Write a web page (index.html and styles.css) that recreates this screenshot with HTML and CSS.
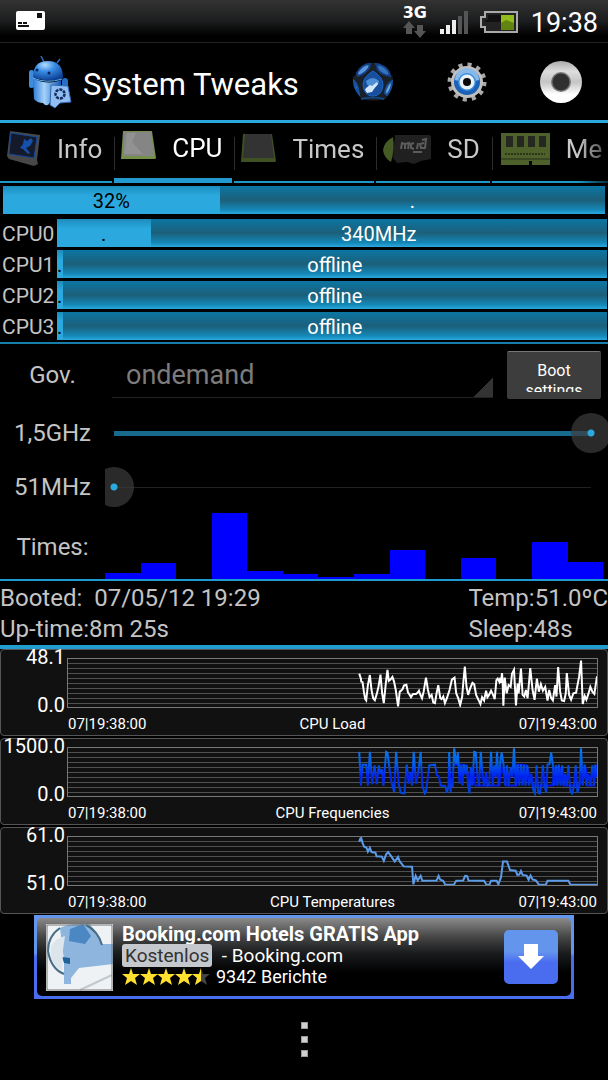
FILE: index.html
```html
<!DOCTYPE html>
<html lang="en">
<head>
    <meta charset="UTF-8">
    <meta name="viewport" content="width=device-width, initial-scale=1.0">
    <title>System Tweaks</title>
    <link rel="stylesheet" href="styles.css">
</head>
<body>

    <div class="status-bar">
        <svg class="sim-icon" width="30" height="20" viewBox="0 0 30 20">
            <rect x="0" y="0" width="29" height="19" rx="2" fill="#fff"/>
            <path d="M21 2h5v5h-5zM2 11h4v2H2zM7 11h4v2H7zM2 14h11v2H2z" fill="#111"/>
        </svg>
        <div class="network">
            <span>3G</span>
            <svg width="24" height="17" viewBox="0 0 24 17">
                <path d="M6 0l6 7H9v6H3V7H0z" fill="#555"/>
                <path d="M17 17l-6-7h3V4h6v6h3z" fill="#555"/>
            </svg>
        </div>
        <svg class="signal" width="29" height="24" viewBox="0 0 29 24">
            <path d="M0 18h4v5H0zM6 14h4v9H6zM12 9h4v14h-4z" fill="#eee"/>
            <path d="M18 5h4v18h-4zM24 0h4v23h-4z" fill="#555"/>
        </svg>
        <svg class="battery" width="38" height="22" viewBox="0 0 38 22">
            <path d="M5 1h32v20H5v-5H1V6h4z" fill="#222" stroke="#aaa" stroke-width="2"/>
            <path d="M8 4h13v7H5v-2h3z" fill="#111"/>
            <rect x="21" y="4" width="13" height="15" fill="#93bd1c"/>
            <path d="M21 12l5-3 8 3v7H21z" fill="#638411"/>
        </svg>
        <span class="clock">19:38</span>
    </div>

    <header class="app-bar">
        <svg class="app-logo" width="44" height="54" viewBox="0 0 44 54">
            <defs>
                <radialGradient id="droid" cx="40%" cy="20%" r="80%">
                    <stop offset="0" stop-color="#b5dcff"/>
                    <stop offset=".4" stop-color="#3b8fe6"/>
                    <stop offset="1" stop-color="#0b3f96"/>
                </radialGradient>
                <linearGradient id="droidBody">
                    <stop offset="0" stop-color="#2c7bd6"/>
                    <stop offset=".4" stop-color="#a5d2fb"/>
                    <stop offset="1" stop-color="#1458b4"/>
                </linearGradient>
            </defs>
            <path d="M15 7L12 1M28 8l3-4" stroke="#2a6fc4" stroke-width="1.5"/>
            <rect x="0" y="15" width="5" height="18" rx="2.5" fill="#3f8cdc"/>
            <rect x="33" y="23" width="6" height="15" rx="3" fill="#276fc6"/>
            <path d="M4 23q14 8 28 2v20q-6 5-12 3v1q-3 3-6-1-6 0-9-4z" fill="url(#droidBody)"/>
            <path d="M4 22q0-16 15-16t15 17q-14 6-30-1z" fill="url(#droid)"/>
            <path d="M4 23q14 6 29 1" stroke="#5db4ff" fill="none"/>
            <circle cx="8" cy="15" r="1.5" fill="#062558"/>
            <circle cx="20" cy="18" r="1.5" fill="#062558"/>
            <path d="M22 30l17 1 3 16-11 1-5 5-5-3z" fill="#91bdf3" stroke="#2c67b2"/>
            <circle cx="31" cy="39" r="4.5" fill="none" stroke="#102c58" stroke-width="2.5" stroke-dasharray="3 1"/>
        </svg>
        <h1>System Tweaks</h1>
        <button class="icon-btn" aria-label="Tools">
            <svg width="42" height="42" viewBox="0 0 42 42">
                <path d="M16 2h11l14 14-7 22q-13 3-25 0L1 16z" fill="#1a2027"/>
                <path d="M5 12Q10 3 18 3l-1 4q-4 6-11 8z" fill="#5b95dc" stroke="#123f86" stroke-width="2"/>
                <path d="M24 3q9 1 13 8l1 4q-8-1-12-6z" fill="#3474bd" stroke="#123f86" stroke-width="2"/>
                <path d="M2 20q4 4 5 13-5-6-5-13zM40 20q0 8-5 14l-2-2q1-8 7-12z" fill="#76a7d9" stroke="#15529f" stroke-width="2"/>
                <path d="M9 38q12-3 23 0" fill="none" stroke="#144786" stroke-width="2"/>
                <path d="M21 10q10 6 10 14-1 11-10 11T11 24q0-8 10-14z" fill="#174f9e" stroke="#1c66c4"/>
                <path d="M14 20q7-6 13 0-1 7-7 6-5 0-6-6z" fill="#4d8ed6"/>
                <path d="M14 27l4-3 2 1 5-4 1 2-4 5-2 3-5 1-2-3z" fill="#d2e6f8"/>
            </svg>
        </button>
        <button class="icon-btn" aria-label="Settings">
            <svg width="42" height="42" viewBox="0 0 42 42">
                <circle cx="21" cy="21" r="17" fill="none" stroke="#a9a9a9" stroke-width="5" stroke-dasharray="4 4.9"/>
                <circle cx="21" cy="21" r="16" fill="#bfbfbf"/>
                <circle cx="21" cy="21" r="13" fill="#1b61b6"/>
                <path d="M9 19a12 12 0 0 1 24 0q-12 4-24 0z" fill="#88b9e8"/>
                <circle cx="21" cy="21" r="9" fill="#3c8edc"/>
                <circle cx="21" cy="21" r="7.5" fill="#e9f1f8"/>
                <circle cx="21" cy="21" r="4" fill="#080808"/>
            </svg>
        </button>
        <button class="icon-btn" aria-label="Record">
            <svg width="42" height="42" viewBox="0 0 42 42">
                <defs>
                    <linearGradient id="ring" x2="0" y2="1">
                        <stop offset="0" stop-color="#aaa"/>
                        <stop offset=".25" stop-color="#ddd"/>
                        <stop offset=".5" stop-color="#c4c4c4"/>
                        <stop offset=".8" stop-color="#fff"/>
                    </linearGradient>
                </defs>
                <circle cx="21" cy="21" r="21" fill="url(#ring)"/>
                <circle cx="21" cy="21" r="10" fill="#777"/>
                <circle cx="21" cy="21" r="8.5" fill="#303030"/>
            </svg>
        </button>
    </header>

    <nav class="tabs">
        <button class="tab">
            <svg width="34" height="36" viewBox="0 0 34 36">
                <path d="M3 0l30 4-3 25 1 4-4 2-25-7-2-3z" fill="#484848"/>
                <path d="M4 2l26 4-3 21-25-4z" fill="#151a2a" stroke="#13469f"/>
                <path d="M17 8l3 2 4-3 2 3-3 5-4 2 4 5-2 1-5-5-3-1 3-4z" fill="#1550aa"/>
            </svg>
            Info
        </button>
        <button class="tab selected">
            <svg width="35" height="36" viewBox="0 0 35 36">
                <path d="M2 1h29l4 27-1 1H0z" fill="#75904b"/>
                <path d="M3 2h27l3 24H2z" fill="#858585"/>
                <path d="M6 3h9l-4 9 11 12H3z" fill="#929292"/>
            </svg>
            CPU
        </button>
        <button class="tab">
            <svg width="35" height="36" viewBox="0 0 35 36">
                <path d="M2 3h29l4 27-1 1H0z" fill="#3f5022"/>
                <path d="M4 3h26l3 24H2z" fill="#333"/>
            </svg>
            Times
        </button>
        <button class="tab">
            <svg width="48" height="36" viewBox="0 0 48 36">
                <path d="M12 4h34q2 0 2 3v21l-10 2-7 3-7-2-10 1-4-5z" fill="#202020"/>
                <path d="M10 6q-9 5-10 13 1 8 8 12 4-13 2-25z" fill="#465a26"/>
                <path d="M18 18l1-6 3 1v5M22 13l4-1-1 6M31 12l-3 1v4l3 1M34 18l1-6M39 9l4-1-1 9h-4l-1-4 4-1M30 21h9" fill="none" stroke="#5c5c5c" stroke-width="2"/>
            </svg>
            SD
        </button>
        <button class="tab">
            <svg width="49" height="36" viewBox="0 0 49 36">
                <path d="M0 2h49v32H31v-4h-3v4H0z" fill="#4e612b"/>
                <path d="M5 5h7v11H5zM16 5h7v11h-7zM27 5h7v11h-7zM38 5h7v11h-7z" fill="#242820"/>
                <path d="M4 23h40" stroke="#2b3818" stroke-width="2" stroke-dasharray="2 1"/>
                <path d="M0 28h49" stroke="#25301a"/>
            </svg>
            Me
        </button>
    </nav>

    <section class="load">
        <div class="meter total">
            <div class="used" style="width: 36%">32%</div>
            <div class="rest">.</div>
        </div>
        <div class="core">
            <span>CPU0</span>
            <div class="meter">
                <div class="used" style="width: 17%">.</div>
                <div class="rest">340MHz</div>
            </div>
        </div>
        <div class="core">
            <span>CPU1</span>
            <div class="meter">
                <div class="used" style="width: 1%">.</div>
                <div class="rest">offline</div>
            </div>
        </div>
        <div class="core">
            <span>CPU2</span>
            <div class="meter">
                <div class="used" style="width: 1%">.</div>
                <div class="rest">offline</div>
            </div>
        </div>
        <div class="core">
            <span>CPU3</span>
            <div class="meter">
                <div class="used" style="width: 1%">.</div>
                <div class="rest">offline</div>
            </div>
        </div>
    </section>

    <section class="settings">
        <div class="row governor">
            <label for="governor">Gov.</label>
            <select id="governor">
                <option>ondemand</option>
            </select>
            <button class="boot-btn"><span>Boot settings</span></button>
        </div>
        <div class="row">
            <label for="maxFreq">1,5GHz</label>
            <div class="slider"><input type="range" class="filled" id="maxFreq" min="51" max="1500" value="1500"></div>
        </div>
        <div class="row">
            <label for="minFreq">51MHz</label>
            <div class="slider"><input type="range" id="minFreq" min="51" max="1500" value="51"></div>
        </div>
        <div class="row times">
            <span class="label">Times:</span>
            <div class="bars">
                <i style="height: 6px"></i>
                <i style="height: 16px"></i>
                <i style="height: 0px"></i>
                <i style="height: 66px"></i>
                <i style="height: 8px"></i>
                <i style="height: 5px"></i>
                <i style="height: 2px"></i>
                <i style="height: 5px"></i>
                <i style="height: 29px"></i>
                <i style="height: 0px"></i>
                <i style="height: 21px"></i>
                <i style="height: 0px"></i>
                <i style="height: 37px"></i>
                <i style="height: 17px"></i>
            </div>
        </div>
    </section>

    <section class="uptime">
        <div>
            <p>Booted:&nbsp; 07/05/12 19:29</p>
            <p>Up-time:8m 25s</p>
        </div>
        <div>
            <p>Temp:51.0ºC</p>
            <p>Sleep:48s</p>
        </div>
    </section>

    <section class="graphs">
        <div class="graph">
            <div class="scale"><span>48.1</span><span>0.0</span></div>
            <svg class="plot" viewBox="-819 55 1593 147" preserveAspectRatio="none">
                <polyline class="load-line" points="58,100 63,115 64,124 68,126 72,155 76,178 79,182 84,135 90,104 95,150 100,175 105,181 110,165 116,140 122,103 127,160 132,190 138,130 143,88 147,122 152,118 158,110 163,125 168,150 175,200 180,155 184,152 188,148 193,136 200,134 205,158 210,165 214,172 219,163 224,162 229,162 234,158 238,152 241,162 247,175 252,155 259,112 265,150 270,172 276,165 281,188 286,190 291,160 296,135 302,175 306,178 311,170 316,190 322,175 330,150 337,118 345,112 350,160 356,175 362,196 368,170 372,120 376,78 381,140 386,165 392,145 399,128 404,132 410,165 417,180 423,193 428,172 434,182 440,152 444,172 449,165 455,152 461,165 466,178 471,120 475,115 480,125 483,112 485,128 488,98 490,130 492,198 496,112 502,160 508,135 514,140 518,100 524,88 530,197 535,130 538,160 545,84 550,165 555,170 560,150 565,175 569,130 573,83 580,150 586,180 593,115 599,155 605,132 611,152 618,140 625,182 630,150 636,175 641,182 648,135 652,170 657,80 663,155 668,182 675,184 680,160 683,98 690,165 696,180 703,160 711,158 720,110 726,60 731,193 737,168 742,180 748,162 754,140 760,155 766,162 774,108"/>
            </svg>
            <div class="legend"><span>07|19:38:00</span><span>CPU Load</span><span>07|19:43:00</span></div>
        </div>
        <div class="graph">
            <div class="scale"><span>1500.0</span><span>0.0</span></div>
            <svg class="plot" viewBox="-819 321 1593 147" preserveAspectRatio="none">
                <defs>
                    <linearGradient id="freq" gradientUnits="userSpaceOnUse" x1="0" y1="321" x2="0" y2="468">
                        <stop offset="0" stop-color="#0a78f0"/>
                        <stop offset=".3" stop-color="#0062ea"/>
                        <stop offset=".6" stop-color="#0022f0"/>
                        <stop offset="1" stop-color="#0050d8"/>
                    </linearGradient>
                </defs>
                <polyline class="freq-line low" points="342,372 370,372 380,374 390,436 400,380 408,436 480,436 485,374 495,410 500,436 530,436 534,372 560,374 575,410 582,436 640,436 646,380 652,436 666,380 674,436 720,436 740,380 745,436 764,436 774,372"/>
                <polyline class="freq-line" points="58,333 63,436 68,372 79,372 84,436 90,333 97,432 104,374 111,432 117,374 121,400 126,386 131,436 139,333 143,335 150,390 155,425 158,436 163,456 169,333 177,430 183,458 194,460 201,372 207,430 213,395 217,436 222,333 229,430 235,400 243,333 248,436 255,460 259,455 269,374 286,372 292,405 298,408 303,436 317,437 322,458 327,437 329,333 333,458 336,410 339,440 344,322 350,370 355,335 360,430 365,374 369,436 373,372 378,402 382,374 386,436 390,460 394,380 399,436 404,333 409,335 414,410 419,436 424,333 429,400 434,436 440,395 444,436 449,434 455,333 460,436 465,374 469,410 473,333 478,436 483,360 487,335 493,374 498,436 503,374 508,436 514,380 519,410 524,322 529,436 535,372 540,436 545,372 550,436 554,374 559,436 564,374 570,436 576,400 582,450 587,460 592,374 597,458 602,460 606,436 611,374 616,436 621,458 625,372 631,370 636,335 641,372 645,436 650,374 655,436 659,372 664,436 669,374 673,436 678,400 683,436 688,374 694,455 699,460 705,436 710,374 715,458 721,436 726,322 731,436 737,372 742,436 748,400 754,436 760,374 765,436 769,372 773,410"/>
            </svg>
            <div class="legend"><span>07|19:38:00</span><span>CPU Frequencies</span><span>07|19:43:00</span></div>
        </div>
        <div class="graph">
            <div class="scale"><span>61.0</span><span>51.0</span></div>
            <svg class="plot" viewBox="-819 587 1593 147" preserveAspectRatio="none">
                <polyline class="temp-line" points="58,602 61,592 64,590 68,605 73,617 80,620 84,632 90,620 95,633 107,635 110,646 126,647 132,660 139,640 145,633 150,640 155,647 165,662 175,648 180,662 192,677 217,678 221,732 228,706 234,720 243,706 248,721 291,720 297,706 302,718 311,721 317,733 343,733 350,721 371,720 377,706 383,707 387,720 434,721 441,733 450,733 455,721 472,721 477,732 485,710 491,662 503,662 512,688 529,690 534,703 540,702 545,691 550,703 562,705 568,718 574,705 580,717 590,720 599,733 620,733 625,721 688,721 694,733 774,733"/>
            </svg>
            <div class="legend"><span>07|19:38:00</span><span>CPU Temperatures</span><span>07|19:43:00</span></div>
        </div>
    </section>

    <div class="ad">
        <a class="ad-inner" href="#">
            <svg class="ad-image" width="67" height="67" viewBox="0 0 67 67">
                <rect width="67" height="67" fill="#eef2f5"/>
                <path d="M14 4q8-4 16-4h14l12 20h11v20l-34 4-8 10v6h-7V36l-1-8z" fill="#8db5dd"/>
                <path d="M24 5l13-5 8 12-6 8-16-3z" fill="#4b87c2"/>
                <path d="M16 33l8 1v6l-6-1z" fill="#206298"/>
                <path d="M14 4Q2 12 2 27q3 18 16 23M40 1q12 6 16 20" fill="none" stroke="#456d86" stroke-width="2"/>
                <path d="M5 22q5-8 14-10l-2 14-1 20Q3 42 5 22z" fill="#dce5eb"/>
                <path d="M34 66l32-15" stroke="#c3c8cc" stroke-width="2"/>
                <rect x="1" y="1" width="65" height="65" fill="none" stroke="#777"/>
            </svg>
            <div class="ad-text">
                <strong>Booking.com Hotels GRATIS App</strong>
                <div><span class="price">Kostenlos</span>&nbsp; - Booking.com</div>
                <div class="rating">
                    <svg width="88" height="18" viewBox="0 0 88 18">
                        <defs>
                            <path id="star" d="M9 0l2 6h7l-5 4 2 7-6-4-6 4 2-7-5-4h7z"/>
                        </defs>
                        <use href="#star" fill="#ffe02e"/>
                        <use href="#star" x="18" fill="#ffe02e"/>
                        <use href="#star" x="35" fill="#ffe02e"/>
                        <use href="#star" x="53" fill="#ffe02e"/>
                        <use href="#star" x="70" fill="#444"/>
                        <path d="M79 0v13l-6 4 2-7-5-4h7z" fill="#ffe02e"/>
                    </svg>
                    9342 Berichte
                </div>
            </div>
            <span class="download">
                <svg width="26" height="26" viewBox="0 0 26 26">
                    <path d="M6 0h14v12h6L13 25 0 12h6z" fill="#fff"/>
                </svg>
            </span>
        </a>
    </div>

    <button class="menu-btn" aria-label="Menu"><i></i><i></i><i></i></button>

</body>
</html>
```
FILE: styles.css
```css
* {
    box-sizing: border-box;
}
body {
    font-family: Roboto, sans-serif;
    background: #000;
    color: #c4c4c4;
    margin: 0;
    overflow-x: hidden;
}
button, select, input {
    font-family: inherit;
    margin: 0;
}
button {
    background: none;
    border: none;
    padding: 0;
    color: inherit;
}
p {
    margin: 0;
}

/* status bar */
.status-bar {
    display: flex;
    align-items: center;
    height: 43px;
    padding: 0 10px 0 16px;
    background: linear-gradient(#333, #1c1d1e 50%, #000 85%);
    border-bottom: 1px solid #222;
}
.sim-icon {
    margin-right: auto;
}
.network {
    display: flex;
    flex-direction: column;
    align-items: center;
    width: 24px;
    margin-right: 13px;
}
.network span {
    font: bold 16px/16px "DejaVu Sans", sans-serif;
    color: #fff;
}
.signal {
    margin: 4px 11px 0 0;
}
.battery {
    margin: 2px 13px 0 0;
}
.clock {
    padding-top: 3px;
    color: #fff;
    font-size: 27px;
}

/* title bar */
.app-bar {
    display: flex;
    align-items: center;
    height: 80px;
    padding: 0 26px 0 29px;
    border-bottom: 3px solid #2ba9df;
}
.app-bar h1 {
    flex: 1;
    margin: 0 0 0 10px;
    padding-top: 5px;
    color: #fff;
    font-size: 31px;
    font-weight: 400;
}
.icon-btn {
    display: flex;
    margin-left: 52px;
}

/* tabs */
.tabs {
    display: flex;
    gap: 2px;
    height: 60px;
    overflow: hidden;
    -webkit-mask-image: linear-gradient(to right, #000 95%, transparent 102%);
    mask-image: linear-gradient(to right, #000 95%, transparent 102%);
}
.tab {
    display: flex;
    flex: none;
    align-items: center;
    gap: 16px;
    padding: 0 10px 6px 7px;
    border-bottom: 2px solid #1e98cc;
    background: linear-gradient(#2c2c2c, #2c2c2c) left 14px / 1px 33px no-repeat;
    color: #c8c8c8;
    font-size: 26px;
}
.tab:first-child {
    background: none;
}
.tab:last-child {
    padding-left: 9px;
}
.tab.selected {
    border-bottom: 5px solid #2299cf;
    color: #fff;
}

/* cpu load */
.load {
    padding: 3px 1px 2px 2px;
    border-bottom: 2px solid #167fa9;
}
.core {
    display: flex;
    align-items: center;
    margin-top: 3px;
}
.core span {
    width: 55px;
    font-size: 21px;
    line-height: 26px;
    padding-top: 2px;
}
.meter {
    display: flex;
    flex: 1;
    height: 28px;
    line-height: 30px;
    text-align: center;
    font-size: 20px;
    background: linear-gradient(#0b76a3, #1c5f7a 50%, #1488b8 85%, #2ba9df);
}
.meter.total {
    margin: 0 2px 5px 1px;
}
.used {
    background: linear-gradient(#1c8dbd, #2ba9df 35%);
    color: #000;
}
.rest {
    flex: 1;
    color: #fff;
}

/* governor and frequencies */
.settings {
    border-bottom: 2px solid #1e9bd0;
}
.row {
    display: flex;
    align-items: center;
    height: 54px;
}
.row label, .row .label {
    flex: none;
    width: 105px;
    text-align: center;
    font-size: 24px;
}
.governor {
    height: 62px;
}
.row select {
    flex: 1;
    appearance: none;
    height: 46px;
    margin: 0 14px 0 7px;
    padding: 0 14px;
    border: none;
    border-bottom: 1px solid #222;
    background: linear-gradient(135deg, transparent 50%, #333 50%) right bottom / 20px 20px no-repeat;
    color: #7c7c7c;
    font-size: 27px;
}
.boot-btn {
    width: 94px;
    height: 48px;
    margin-right: 7px;
    padding: 9px 14px 7px;
    border-top: 1px solid #777;
    border-radius: 2px;
    background: #3d3d3d;
    color: #fff;
    font-size: 16px;
    line-height: 20px;
}
.boot-btn span {
    display: block;
    height: 31px;
    overflow: hidden;
}
.slider {
    flex: 1;
    overflow: hidden;
}
.slider input {
    display: block;
    appearance: none;
    width: calc(100% + 14px);
    height: 40px;
    margin-left: -11px;
    background: linear-gradient(#222, #222) center / calc(100% - 40px) 1px no-repeat;
}
.slider .filled {
    background: linear-gradient(#176a8b, #176a8b) center / calc(100% - 40px) 5px no-repeat;
}
.slider input::-webkit-slider-thumb {
    appearance: none;
    width: 40px;
    height: 40px;
    border-radius: 50%;
    background: radial-gradient(circle, #2ba9df 3px, rgba(60, 60, 60, 0.7) 4px);
}
.times {
    height: 65px;
}
.bars {
    display: flex;
    flex: 1;
    align-items: flex-end;
    align-self: stretch;
    padding-right: 5px;
}
.bars i {
    flex: 1;
    background: #00f;
}

/* uptime */
.uptime {
    display: flex;
    justify-content: space-between;
    padding-top: 2px;
    border-bottom: 4px solid #229bcf;
    font-size: 24px;
    line-height: 31px;
}

/* graphs */
.graphs {
    display: grid;
    gap: 2px;
}
.graph {
    display: grid;
    grid-template-columns: 66px 1fr;
    align-content: start;
    height: 87px;
    padding: 8px 9px 0 0;
    border: 1px solid #555;
    border-radius: 4px;
    background: #111;
    color: #fff;
}
.scale {
    display: flex;
    flex-direction: column;
    justify-content: space-between;
    height: 70px;
    margin-top: -12px;
    padding-right: 2px;
    text-align: right;
    font-size: 20px;
    line-height: 22px;
}
.plot {
    width: 100%;
    height: 50px;
    border: 1px solid #777;
    background: repeating-linear-gradient(transparent 0 4px, #505050 4px 5px);
}
.plot polyline {
    fill: none;
    stroke-width: 2px;
    vector-effect: non-scaling-stroke;
}
.load-line {
    stroke: #fff;
}
.freq-line {
    stroke: url(#freq);
}
.freq-line.low {
    stroke: #0018e8;
}
.temp-line {
    stroke: #5b9be8;
}
.legend {
    grid-column: 2;
    display: flex;
    justify-content: space-between;
    padding: 0 1px;
    font-size: 15px;
    line-height: 16px;
}

/* ad banner */
.ad {
    max-width: 540px;
    margin: 1px auto 0;
    padding: 3px;
    background: linear-gradient(#6495ed 45%, #4a6df0 50%);
}
.ad-inner {
    display: flex;
    align-items: center;
    height: 78px;
    padding: 0 13px 0 9px;
    border-radius: 5px;
    background: linear-gradient(#8a8a8a, #444 25%, #1a1c1e 45%, #000 70%);
    color: #fff;
    text-decoration: none;
}
.ad-text {
    flex: 1;
    margin-left: 9px;
    padding-bottom: 3px;
    font-size: 19px;
    line-height: 21px;
    white-space: nowrap;
}
.ad-text strong {
    font-size: 20px;
}
.price {
    padding: 0 3px;
    border-radius: 3px;
    background: #c5c8cc;
    color: #333;
}
.rating {
    display: flex;
    align-items: center;
    gap: 6px;
    font-size: 18px;
}
.download {
    display: flex;
    align-items: center;
    justify-content: center;
    width: 54px;
    height: 54px;
    border-radius: 5px;
    background: linear-gradient(#6495ed 40%, #4a6df0 60%);
}

/* menu key */
.menu-btn {
    display: grid;
    gap: 7px;
    margin: 23px auto 24px;
}
.menu-btn i {
    width: 7px;
    height: 7px;
    border: 1px solid #999;
    background: #d0d0d0;
}
```
